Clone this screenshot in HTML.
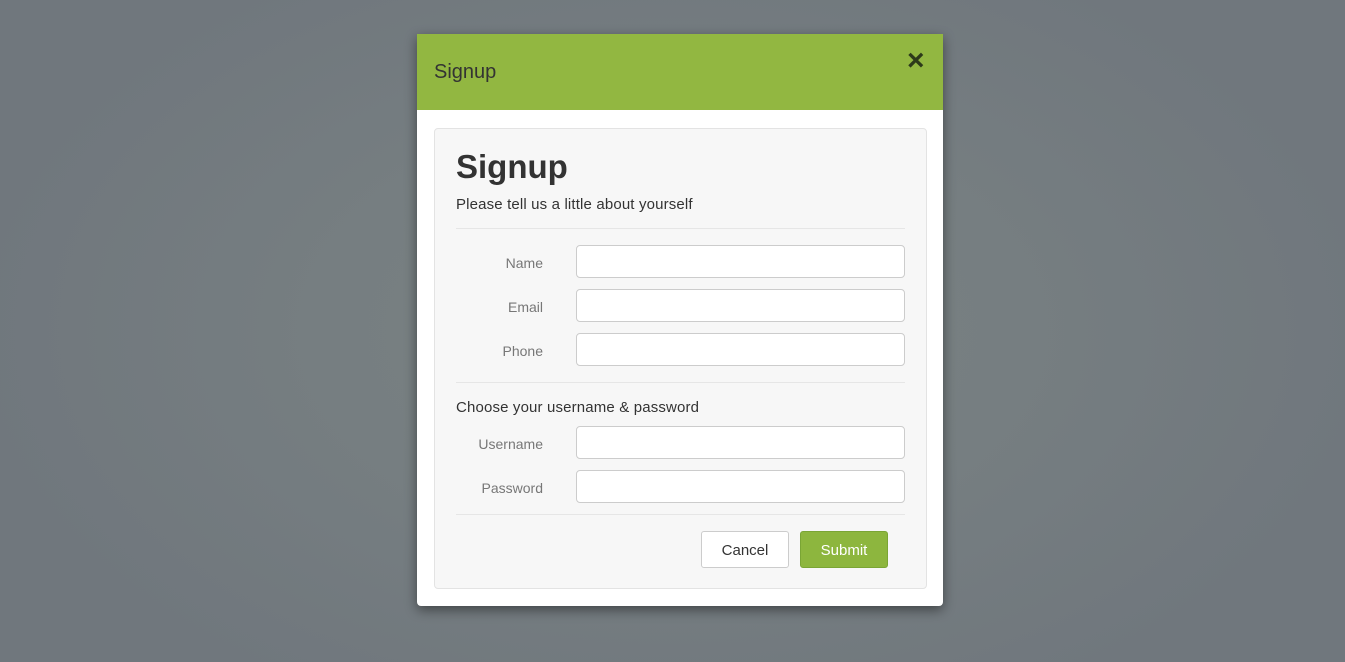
<!DOCTYPE html>
<html><head><style>
*{box-sizing:border-box;margin:0;padding:0}
body{width:1345px;height:662px;overflow:hidden;background:radial-gradient(ellipse 700px 420px at 50% 50%,#7a8282 0%,#767e81 50%,#70777d 100%);font-family:"Liberation Sans",sans-serif;position:relative}
.modal{position:absolute;left:417px;top:34px;width:526px;height:572px;background:#fff;border-radius:0 0 4px 4px;box-shadow:0 4px 12px rgba(0,0,0,.45)}
.hdr{position:absolute;left:0;top:0;width:526px;height:76px;background:#92b741}
.hdr .t{position:absolute;left:17px;top:27px;font-size:20px;color:#333}
.hdr .x{position:absolute;left:490px;top:12px;font-size:30px;line-height:30px;font-weight:bold;color:#2d3a1a}
.well{position:absolute;left:17px;top:94px;width:493px;height:461px;background:#f7f7f7;border:1px solid #e3e3e3;border-radius:4px}
.abs{position:absolute}
h1{position:absolute;left:21px;top:19px;font-size:33px;font-weight:bold;color:#333}
.p{font-size:15px;color:#333;left:21px;letter-spacing:0.15px}
.hr{position:absolute;left:21px;width:449px;height:1px;background:#e6e6e6}
.lbl{position:absolute;width:87px;text-align:right;font-size:14px;color:#777;left:21px}
.in{position:absolute;left:141px;width:329px;height:33px;background:#fff;border:1px solid #ccc;border-radius:4px}
.btn{position:absolute;top:402px;height:37px;border-radius:3px;font-size:15px;text-align:center;line-height:37px}
</style></head><body>
<div class="modal">
<div class="hdr"><div class="t">Signup</div><div class="x">×</div></div>
<div class="well">
<h1>Signup</h1>
<div class="abs p" style="top:67px">Please tell us a little about yourself</div>
<div class="hr" style="top:99px"></div>
<div class="lbl" style="top:126px">Name</div><div class="in" style="top:116px"></div>
<div class="lbl" style="top:170px">Email</div><div class="in" style="top:160px"></div>
<div class="lbl" style="top:214px">Phone</div><div class="in" style="top:204px"></div>
<div class="hr" style="top:253px"></div>
<div class="abs p" style="top:270px">Choose your username &amp; password</div>
<div class="lbl" style="top:307px">Username</div><div class="in" style="top:297px"></div>
<div class="lbl" style="top:351px">Password</div><div class="in" style="top:341px"></div>
<div class="hr" style="top:385px"></div>
<div class="btn" style="left:266px;width:88px;background:#fff;border:1px solid #ccc;color:#333">Cancel</div>
<div class="btn" style="left:365px;width:88px;background:#8db63e;border:1px solid #7aa535;color:#fff">Submit</div>
</div>
</div>
</body></html>
